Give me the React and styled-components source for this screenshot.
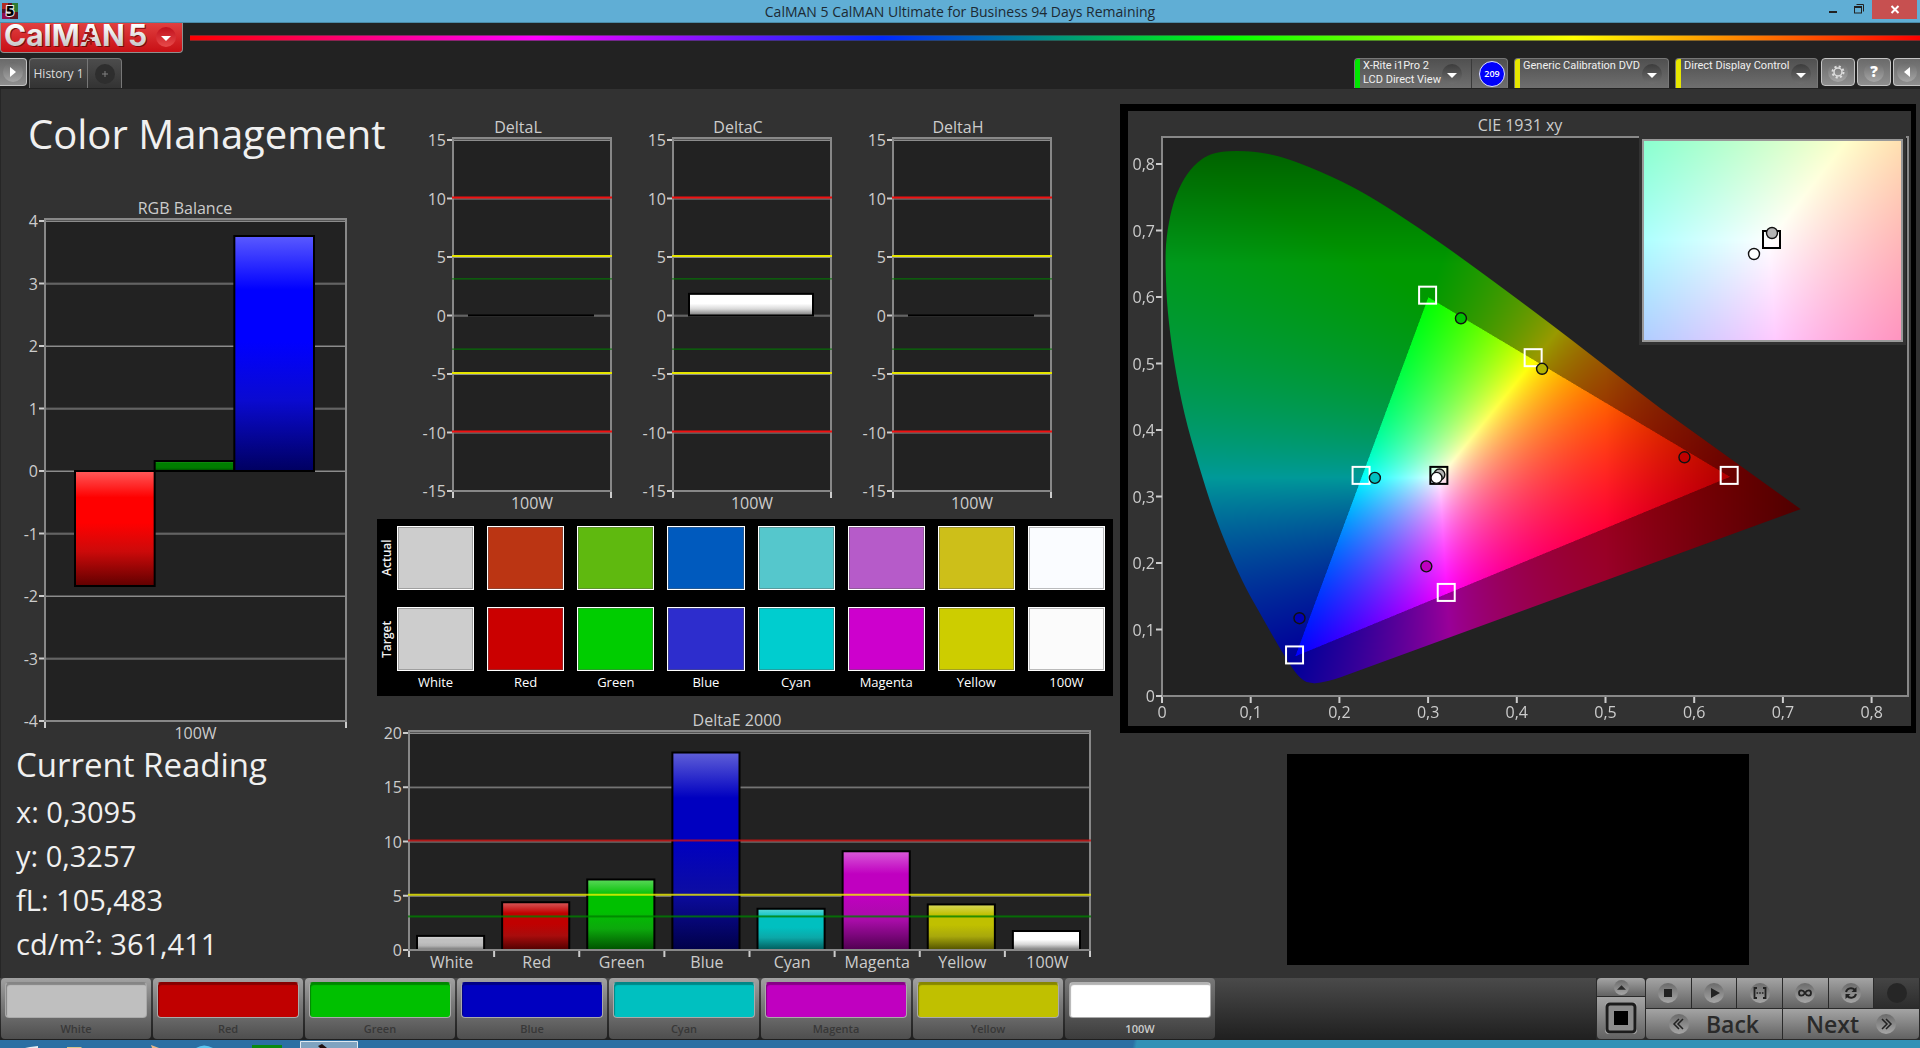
import React, { useEffect, useRef } from 'react';
import styled, { createGlobalStyle, css } from 'styled-components';

const GlobalStyle = createGlobalStyle`
  * {
    box-sizing: border-box;
  }

  body {
    margin: 0;
    background: #323232;
    color: #f0f0f0;
    font-family: "Open Sans", "Noto Sans", sans-serif;
  }

  h1, h2, p {
    margin: 0;
    font-weight: 400;
  }

  button {
    font-family: inherit;
    padding: 0;
    border: 0;
    cursor: pointer;
  }
`;

const Page = styled.div`
  display: flex;
  flex-direction: column;
  min-height: 100vh;
`;

/* ---------- window title ---------- */

const TitleBar = styled.header`
  display: grid;
  grid-template-columns: 1fr auto 1fr;
  height: 23px;
  background: #60aed5;
  border-bottom: 1px solid #4b8ba8;
`;

const AppIcon = styled.svg`
  display: block;
  width: 16px;
  height: 16px;
  margin: 3px 0 0 2px;
`;

const WindowTitle = styled.p`
  font-size: 14px;
  line-height: 23px;
  color: #1c2a33;
`;

const WindowControls = styled.div`
  display: flex;
  justify-content: flex-end;
  padding-right: 3px;
`;

const WindowButton = styled.button`
  width: ${props => (props.$close ? '45px' : '26px')};
  height: 19px;
  background: ${props => (props.$close ? '#c75050' : 'transparent')};

  svg {
    display: block;
    margin: 0 auto;
  }
`;

/* ---------- brand and tabs ---------- */

const BrandRow = styled.div`
  display: flex;
  height: 35px;
  background: #222;
`;

const BrandButton = styled.button`
  width: 183px;
  height: 30px;
  background: linear-gradient(#e04040, #c80f14);
  border: 1px solid #8f8f8f;
  border-top: 0;
  border-radius: 0 0 4px 4px;

  svg {
    display: block;
  }
`;

const Rainbow = styled.div`
  flex: 1;
  height: 6px;
  margin: 12px 0 0 7px;
  border: solid rgba(60, 60, 60, 0.6);
  border-width: 1px 0;
  background: linear-gradient(90deg, #f00, #f0f 20%, #0028ff 40%, #0f0 60%, #ff0 80%, #f00);
`;

const TabRow = styled.div`
  display: flex;
  align-items: flex-start;
  height: 31px;
  background: #222;
`;

const Spacer = styled.div`
  flex: 1;
`;

const SquareButton = styled.button`
  display: flex;
  align-items: center;
  justify-content: center;
  width: 34px;
  height: 28px;
  margin-right: 2px;
  background: linear-gradient(#6a6a6a, #8f8f8f);
  border: 1px solid #c4c4c4;
  border-radius: 4px;

  ${props => props.$edge === 'left' && css`
    width: 27px;
    border-left: 0;
    border-radius: 0 4px 4px 0;
  `}

  ${props => props.$edge === 'right' && css`
    width: 27px;
    margin-right: 0;
    border-right: 0;
    border-radius: 4px 0 0 4px;
  `}
`;

const Tab = styled.button`
  height: 30px;
  width: ${props => props.$width};
  font-size: 12px;
  color: #ddd;
  background: linear-gradient(#4c4c4c, #333);
  border: 1px solid #777;
  border-bottom: 0;
  border-radius: ${props => (props.$add ? '0 4px 0 0' : '4px 0 0 0')};
  border-left-width: ${props => (props.$add ? 0 : '1px')};
  display: flex;
  align-items: center;
  justify-content: center;
  white-space: nowrap;
`;

const DeviceList = styled.div`
  display: flex;
  gap: 6px;
  margin-right: 3px;
`;

const DeviceButton = styled.button`
  display: flex;
  height: 30px;
  width: ${props => props.$width};
  overflow: hidden;
  color: #f0f0f0;
  text-align: left;
  background: linear-gradient(#505050, #6f6f6f);
  border: 1px solid #777;
  border-bottom: 0;
  border-radius: 4px 4px 0 0;

  &::before {
    content: '';
    flex: none;
    width: 5px;
    height: 100%;
    background: ${props => props.$status};
  }
`;

const DeviceName = styled.span`
  flex: 1;
  min-width: 0;
  padding: 0 0 0 3px;
  font-family: Roboto, sans-serif;
  font-size: 11px;
  line-height: 14px;
  white-space: pre;
`;

const DeviceIcon = styled.span`
  display: flex;
  align-items: center;
  align-self: center;
  padding-right: ${props => (props.$wide ? '9px' : '6px')};
`;

const CountCell = styled.span`
  display: flex;
  align-items: center;
  justify-content: flex-end;
  width: 36px;
  padding-right: 2px;
  border-left: 1px solid #3a3a3a;
`;

const CountBadge = styled.span`
  width: 26px;
  height: 26px;
  border: 1px solid #dfe3ff;
  border-radius: 50%;
  background: #0000fa;
  color: #fff;
  font-size: 9px;
  font-weight: 600;
  line-height: 24px;
  text-align: center;
`;

/* ---------- workspace ---------- */

const Workspace = styled.main`
  flex: 1;
  display: grid;
  grid-template-columns: minmax(0, 377fr) minmax(0, 743fr) minmax(0, 800fr);
  align-items: start;
  background: #323232;
  box-shadow: inset 1px 0 #262626;
`;

const Heading = styled.h1`
  padding: 19px 0 0 28px;
  font-size: 40px;
  line-height: 52px;
  white-space: nowrap;
`;

const ReadingTitle = styled.h2`
  padding: 0 0 2px 16px;
  font-size: 33px;
  line-height: 46px;
`;

const Reading = styled.p`
  padding-left: 16px;
  font-size: 29px;
  line-height: 44px;
`;

const ChartSvg = styled.svg`
  display: block;
  width: 100%;
  height: auto;
  font-size: 16px;
  fill: #ccc;
`;

const MiddleColumn = styled.div`
  padding-top: 30px;
`;

const DeltaRow = styled.div`
  display: grid;
  grid-template-columns: repeat(3, 1fr);
  padding: 0 49px 0 34px;
`;

const SwatchPanel = styled.section`
  margin-right: 7px;
  padding: 7px 8px 2px 0;
  background: #000;
`;

const SwatchRow = styled.div`
  display: flex;
  height: 64px;
  margin-bottom: ${props => (props.$last ? 0 : '17px')};
`;

const SwatchRowName = styled.div`
  width: 20px;
  font-size: 12px;
  font-weight: 600;
  line-height: 20px;
  text-align: center;
  writing-mode: vertical-rl;
  transform: rotate(180deg);
`;

const SwatchGrid = styled.div`
  flex: 1;
  display: grid;
  grid-template-columns: repeat(8, 1fr);
  gap: 13px;
`;

const Swatch = styled.div`
  background: ${props => props.$color};
  border: 1px solid #fff;
  box-shadow: inset 0 0 0 1px rgba(90, 90, 90, 0.4);
`;

const SwatchNames = styled(SwatchGrid)`
  padding-left: 20px;
  font-size: 13px;
  line-height: 23px;
  text-align: center;
  color: #fff;
`;

const RightColumn = styled.div`
  padding: 15px 4px 0 0;
`;

const CiePanel = styled.section`
  border: solid #000;
  border-width: 7px 5px 7px 8px;
`;

const GamutCanvas = styled.canvas`
  display: block;
  width: 100%;
  height: 100%;
`;

const Preview = styled.div`
  width: 58%;
  height: 211px;
  margin: 21px auto 0;
  background: #000;
`;

/* ---------- bottom bar ---------- */

const BottomBar = styled.footer`
  display: flex;
  justify-content: space-between;
  height: 62px;
  background: linear-gradient(#4a4a4a, #1f1f1f);
`;

const PatternList = styled.div`
  display: flex;
  gap: 2px;
  padding-left: 1px;
`;

const PatternButton = styled.button`
  display: flex;
  flex-direction: column;
  align-items: center;
  width: 150px;
  height: 61px;
  padding-top: 4px;
  border-radius: 4px;
  background: ${props => (props.$active
    ? 'linear-gradient(#787878, #3c3c3c)'
    : 'linear-gradient(#a2a2a2, #7c7c7c 40%, #4e4e4e)')};
  color: ${props => (props.$active ? '#ccc' : '#383838')};
  font-size: 11px;
  font-weight: 600;
  line-height: 21px;
`;

const PatternColor = styled.span`
  width: 142px;
  height: 38px;
  border: 1px solid #aaa;
  border-top-color: rgba(0, 0, 0, 0.3);
  border-radius: 4px;
  background: ${props => props.$color};
  box-shadow: inset 1px 2px 1px rgba(0, 0, 0, 0.3);
`;

const Transport = styled.div`
  display: grid;
  grid-template-columns: 48px 273px;
  gap: 1px;
  padding: 0 1px 1px;
  background: #2a2a2a;
`;

const SourceStack = styled.div`
  display: grid;
  grid-template-rows: 18px 1fr;
  gap: 1px;
`;

const ButtonStack = styled.div`
  display: grid;
  grid-template-rows: 30px 1fr;
  gap: 1px;
`;

const ButtonLine = styled.div`
  display: grid;
  grid-template-columns: repeat(${props => props.$count}, 1fr);
  gap: 1px;
`;

const MetalButton = styled.button`
  display: flex;
  align-items: center;
  justify-content: center;
  gap: 17px;
  border-radius: ${props => props.$radius || 0};
  background: ${props => (props.$off
    ? 'linear-gradient(#454545, #2c2c2c)'
    : 'linear-gradient(#a4a4a4, #626262)')};
  color: #2a2a2a;
  font-size: 23px;
  font-weight: 600;
  line-height: 30px;
`;

const Taskbar = styled.div`
  height: 8px;
  background: linear-gradient(100deg, #2b6fa3 59%, #3191b6 59.2%, #3191b6);

  svg {
    display: block;
  }
`;

/* ---------- icons ---------- */

const RoundIcon = ({ size = 20, dark, children }) => (
  <svg width={size} height={size} viewBox="0 0 20 20" aria-hidden="true">
    <defs>
      <linearGradient id="roundDark" x1="0" y1="0" x2="0" y2="1">
        <stop offset="0" stopColor="#3c3c3c" />
        <stop offset="1" stopColor="#6e6e6e" />
      </linearGradient>
      <linearGradient id="roundLight" x1="0" y1="0" x2="0" y2="1">
        <stop offset="0" stopColor="#6b6b6b" />
        <stop offset="1" stopColor="#a6a6a6" />
      </linearGradient>
    </defs>
    <circle cx="10" cy="10" r="10" fill={dark ? 'url(#roundDark)' : 'url(#roundLight)'} />
    {children}
  </svg>
);

const Caret = () => (
  <RoundIcon dark>
    <path d="M5 9h10l-5 5z" fill="#fff" />
  </RoundIcon>
);

const Logo = () => (
  <svg width="181" height="29" viewBox="1 23 181 29" aria-label="CalMAN 5">
    <defs>
      <linearGradient id="logoText" x1="0" y1="0" x2="0" y2="1">
        <stop offset="0.2" stopColor="#fff" />
        <stop offset="0.8" stopColor="#c9c9c9" />
      </linearGradient>
      <linearGradient id="logoRound" x1="0" y1="0" x2="0" y2="1">
        <stop offset="0" stopColor="#c0101c" />
        <stop offset="1" stopColor="#e84a4a" />
      </linearGradient>
    </defs>
    <g fontFamily="Inter, sans-serif" fontWeight="700" fontSize="30">
      <g fill="#7a0a0a">
        <text x="5" y="47">CalMAN</text>
        <text x="129" y="47">5</text>
      </g>
      <g fill="url(#logoText)">
        <text x="4" y="46">CalMAN</text>
        <text x="128" y="46">5</text>
      </g>
    </g>
    <g fill="none" stroke="#a01414" strokeWidth="2" strokeLinecap="round">
      <circle cx="91" cy="30" r="1" />
      <path d="M89 33l-2 5 4 2v4M87 38l-2 3h-3M85 33h4l3 3h2" />
    </g>
    <circle cx="166" cy="37" r="10" fill="url(#logoRound)" />
    <path d="M161 36h10l-5 5z" fill="#fff" />
  </svg>
);

/* ---------- bar charts ---------- */

const BAR_TONES = {
  red: ['#ff5a5a', '#ff0000', '#cc0a0a', '#600000'],
  green: ['#2a982a', '#007e00', '#007a00', '#004000'],
  blue: ['#5a5aff', '#0000ff', '#0a0ad0', '#000060'],
  snow: ['#ffffff', '#ffffff', '#d8d8d8', '#777777'],
  gray: ['#dcdcdc', '#c0c0c0', '#b4b4b4', '#707070'],
  darkRed: ['#d85a5a', '#c00000', '#a80c0c', '#500000'],
  darkGreen: ['#5ad85a', '#00c000', '#0ca80c', '#005000'],
  darkBlue: ['#5f5fd8', '#0000c0', '#0c0ca4', '#000048'],
  darkCyan: ['#5ad8d8', '#00c0c0', '#0ca8a8', '#005a5a'],
  darkMagenta: ['#d85ad8', '#c000c0', '#a80ca8', '#500050'],
  darkYellow: ['#d8d85a', '#c0c000', '#a8a80c', '#505000'],
};

const BarGradients = () => (
  <defs>
    {Object.entries(BAR_TONES).map(([name, tones]) => (
      <linearGradient key={name} id={`bar-${name}`} x1="0" y1="0" x2="0" y2="1">
        <stop offset="0" stopColor={tones[0]} />
        <stop offset="0.23" stopColor={tones[1]} />
        <stop offset="0.45" stopColor={tones[1]} />
        <stop offset="0.7" stopColor={tones[2]} />
        <stop offset="1" stopColor={tones[3]} />
      </linearGradient>
    ))}
  </defs>
);

const BarChart = ({
  width, height, plot, title, titleX, max, min, step, bars, barInset, groups, limits = [], limitOpacity = 1,
}) => {
  const scale = (plot.bottom - plot.top - 2) / (max - min);
  const yOf = value => plot.bottom - (value - min) * scale;
  const plotWidth = plot.right - plot.left;
  const groupWidth = plotWidth / groups.length;
  const barsPerGroup = bars.length / groups.length;
  const barWidth = (groupWidth - barInset * 2 - 2) / barsPerGroup;
  const ticks = [];
  for (let value = min; value <= max; value += step) ticks.push(value);

  return (
    <ChartSvg viewBox={`0 0 ${width} ${height}`} role="img" aria-label={title}>
      <BarGradients />
      <text x={titleX} y={plot.top - 5} textAnchor="middle">{title}</text>
      <rect x={plot.left} y={plot.top} width={plotWidth} height={plot.bottom - plot.top} fill="#222" />
      {ticks.map(value => (
        <g key={value}>
          <rect x={plot.left} y={yOf(value) - 1} width={plotWidth} height="1" fill="#555" />
          <rect x={plot.left} y={yOf(value)} width={plotWidth} height="1" fill="#8c8c8c" />
          <rect x={plot.left - 6} y={yOf(value) - 1} width="6" height="2" />
          <text x={plot.left - 7} y={yOf(value) + 6} textAnchor="end">{value}</text>
        </g>
      ))}
      {bars.map((bar, index) => {
        const group = Math.floor(index / barsPerGroup);
        const x = plot.left + group * groupWidth + barInset + (index % barsPerGroup) * barWidth;
        const top = yOf(Math.max(bar.value, 0));
        const barHeight = Math.abs(bar.value) * scale;
        return (
          <rect
            key={index}
            x={x}
            y={top}
            width={barWidth}
            height={barHeight}
            fill={`url(#bar-${bar.tone})`}
            stroke="#000"
            strokeWidth="2"
          />
        );
      })}
      <rect
        x={plot.left}
        y={plot.top}
        width={plotWidth}
        height={plot.bottom - plot.top}
        fill="none"
        stroke="#888"
        strokeWidth="2"
      />
      {limits.map(limit => (
        <rect
          key={limit.value}
          x={plot.left - 1}
          y={yOf(limit.value) - 2}
          width={plotWidth + 2}
          height={limit.thin ? 1 : 2}
          fill={limit.color}
          opacity={limitOpacity}
        />
      ))}
      {groups.map((group, index) => (
        <g key={group}>
          <rect x={plot.left + index * groupWidth - 1} y={plot.bottom + 1} width="2" height="6" />
          <text x={plot.left + (index + 0.5) * groupWidth} y={plot.bottom + 18} textAnchor="middle">{group}</text>
        </g>
      ))}
      <rect x={plot.right - 1} y={plot.bottom + 1} width="2" height="6" />
    </ChartSvg>
  );
};

const DELTA_LIMITS = [
  { value: 10, color: '#f01010' },
  { value: 5, color: '#e6e600' },
  { value: 3, color: '#008000', thin: true },
  { value: -3, color: '#008000', thin: true },
  { value: -5, color: '#e6e600' },
  { value: -10, color: '#f01010' },
];

const DELTA_CHARTS = [
  { title: 'DeltaL', value: 0.02 },
  { title: 'DeltaC', value: 1.85 },
  { title: 'DeltaH', value: 0.02 },
];

const DELTA_E = [
  { name: 'White', value: 1.3, tone: 'gray' },
  { name: 'Red', value: 4.4, tone: 'darkRed' },
  { name: 'Green', value: 6.5, tone: 'darkGreen' },
  { name: 'Blue', value: 18.2, tone: 'darkBlue' },
  { name: 'Cyan', value: 3.8, tone: 'darkCyan' },
  { name: 'Magenta', value: 9.1, tone: 'darkMagenta' },
  { name: 'Yellow', value: 4.2, tone: 'darkYellow' },
  { name: '100W', value: 1.75, tone: 'snow' },
];

/* ---------- CIE diagram ---------- */

const CIE = { left: 34, bottom: 585, unitX: 887, unitY: 665 };
const cieX = x => CIE.left + x * CIE.unitX;
const cieY = y => CIE.bottom - y * CIE.unitY;

const LOCUS = [
  [0.163, 0.021], [0.158, 0.024], [0.148, 0.039], [0.131, 0.076], [0.111, 0.123], [0.094, 0.163],
  [0.076, 0.215], [0.058, 0.276], [0.041, 0.348], [0.025, 0.423], [0.013, 0.505], [0.006, 0.58],
  [0.004, 0.636], [0.004, 0.68], [0.009, 0.723], [0.016, 0.755], [0.028, 0.786], [0.044, 0.808],
  [0.061, 0.818], [0.084, 0.82], [0.111, 0.818], [0.143, 0.808], [0.192, 0.781], [0.233, 0.753],
  [0.291, 0.703], [0.349, 0.648], [0.442, 0.556], [0.524, 0.471], [0.6, 0.394], [0.72, 0.281],
];
const LOCUS_END = [[0.201, 0.028], [0.186, 0.021], [0.172, 0.019]];

const locusPath = () => {
  const px = LOCUS.map(([x, y]) => [cieX(x), cieY(y)]);
  const end = LOCUS_END.map(([x, y]) => [cieX(x), cieY(y)]);
  let d = `M${px[0]}`;
  for (let i = 1; i < px.length - 2; i += 1) {
    const mid = [(px[i][0] + px[i + 1][0]) / 2, (px[i][1] + px[i + 1][1]) / 2];
    d += `Q${px[i]} ${mid}`;
  }
  d += `L${px[px.length - 1]}L${end[0]}Q${end[1]} ${end[2]}Z`;
  return d;
};

// Linear RGB scaled to its largest channel; colours outside Rec.709 are dimmed
const chromaToRgb = (x, y) => {
  const z = 1 - x - y;
  const r = 3.2406 * x - 1.5372 * y - 0.4986 * z;
  const g = -0.9689 * x + 1.8758 * y + 0.0415 * z;
  const b = 0.0557 * x - 0.204 * y + 1.057 * z;
  const peak = Math.max(r, g, b);
  let level = Math.min(r, g, b) < 0 ? 0.6 : 1;
  if (x > 0.5) level *= Math.max(0.5, 1 - (x - 0.5) * 2.2);
  if (y > 0.65) level *= Math.max(0.6, 1 - (y - 0.65) * 2.1);
  return [r, g, b].map(channel => (Math.max(0, channel) / peak) * 255 * level);
};

const Gamut = ({ width, height, toXy, clip }) => {
  const ref = useRef(null);

  useEffect(() => {
    const ctx = ref.current.getContext('2d');
    const w = width * 2;
    const h = height * 2;
    const image = ctx.createImageData(w, h);
    for (let py = 0; py < h; py += 1) {
      for (let px = 0; px < w; px += 1) {
        const [x, y] = toXy(px / 2, py / 2);
        image.data.set([...chromaToRgb(x, y), 255], (py * w + px) * 4);
      }
    }
    ctx.putImageData(image, 0, 0);
    if (clip) {
      ctx.globalCompositeOperation = 'destination-in';
      ctx.scale(2, 2);
      ctx.fill(new Path2D(clip));
    }
  }, []);

  return <GamutCanvas ref={ref} width={width * 2} height={height * 2} />;
};

const TARGETS = [[0.3, 0.602], [0.419, 0.508], [0.64, 0.331], [0.225, 0.331], [0.321, 0.155], [0.15, 0.061]];

const MEASURED = [
  [0.337, 0.568, '#00c000'],
  [0.4285, 0.492, '#b4b400'],
  [0.589, 0.359, '#c00000'],
  [0.24, 0.328, '#00c0c0'],
  [0.298, 0.195, '#c000c0'],
  [0.155, 0.117, '#0000b4'],
  [0.3127, 0.333, '#b4b4b4'],
  [0.3095, 0.328, '#ffffff'],
];

const INSET = { x: 515, y: 29, width: 259, height: 201 };

const CieChart = () => {
  const axis = [0, 1, 2, 3, 4, 5, 6, 7, 8];
  const label = n => (n === 0 ? '0' : `0,${n}`);

  return (
    <ChartSvg viewBox="0 0 783 615" role="img" aria-label="CIE 1931 xy">
      <text x="392" y="20" textAnchor="middle">CIE 1931 xy</text>
      <rect x="34" y="26" width="746" height="559" fill="#222" />
      <foreignObject x="0" y="0" width="783" height="615">
        <Gamut
          width={783}
          height={615}
          toXy={(px, py) => [(px - CIE.left) / CIE.unitX, (CIE.bottom - py) / CIE.unitY]}
          clip={locusPath()}
        />
      </foreignObject>
      <rect x="34" y="26" width="746" height="559" fill="none" stroke="#888" strokeWidth="2" />
      {axis.map(n => (
        <g key={n}>
          <rect x="28" y={cieY(n / 10) - 1} width="6" height="2" />
          <text x="27" y={cieY(n / 10) + 6} textAnchor="end">{label(n)}</text>
          <rect x={cieX(n / 10) - 1} y="586" width="2" height="6" />
          <text x={cieX(n / 10)} y="607" textAnchor="middle">{label(n)}</text>
        </g>
      ))}
      {TARGETS.map(([x, y]) => (
        <rect key={x} x={cieX(x) - 9} y={cieY(y) - 9} width="17" height="17" fill="none" stroke="#fff" strokeWidth="2" />
      ))}
      <rect x={cieX(0.3127) - 9} y={cieY(0.331) - 9} width="17" height="17" fill="none" stroke="#000" strokeWidth="2" />
      {MEASURED.map(([x, y, color]) => (
        <circle key={x} cx={cieX(x)} cy={cieY(y)} r="5.5" fill={color} stroke="#111" strokeWidth="1.4" />
      ))}
      <rect x={INSET.x - 4} y={INSET.y - 4} width={INSET.width + 8} height={INSET.height + 8} fill="#323232" />
      <foreignObject {...INSET}>
        <Gamut
          width={INSET.width}
          height={INSET.height}
          toXy={(px, py) => [0.289 + px / 5330, 0.3531 - py / 4146]}
        />
      </foreignObject>
      <rect {...INSET} fill="none" stroke="#999" strokeWidth="2" />
      <rect x="635" y="120" width="17" height="17" fill="none" stroke="#000" strokeWidth="2" />
      <circle cx="644" cy="122" r="5.5" fill="#b4b4b4" stroke="#111" strokeWidth="1.4" />
      <circle cx="626" cy="143" r="5.5" fill="#fff" stroke="#111" strokeWidth="1.4" />
    </ChartSvg>
  );
};

/* ---------- data ---------- */

const NAMES = ['White', 'Red', 'Green', 'Blue', 'Cyan', 'Magenta', 'Yellow', '100W'];
const ACTUAL = ['#cdcdcd', '#bb3513', '#5fb90f', '#005abe', '#55c7cc', '#b65bc9', '#cdbf19', '#fafcff'];
const TARGET = ['#cdcdcd', '#cb0000', '#00cd00', '#2d2dcd', '#00cdcf', '#cd00cd', '#cdcd00', '#fbfbfb'];
const PATTERNS = ['#bfbfbf', '#c00000', '#00c000', '#0000c0', '#00c0c0', '#c000c0', '#c0c000', '#ffffff'];
const READINGS = ['x: 0,3095', 'y: 0,3257', 'fL: 105,483', 'cd/m²: 361,411'];

const App = () => (
  <Page>
    <GlobalStyle />

    <TitleBar>
      <AppIcon viewBox="0 0 16 16" aria-hidden="true">
        <rect width="16" height="16" fill="#5a1420" />
        <rect width="6" height="6" fill="#b02a20" />
        <rect x="10" width="6" height="9" fill="#2d7a35" />
        <rect y="10" width="8" height="6" fill="#901050" />
        <text x="8" y="13" textAnchor="middle" fontSize="14" fontWeight="800" fill="#000" stroke="#eee" strokeWidth="2" paintOrder="stroke">5</text>
      </AppIcon>
      <WindowTitle>CalMAN 5 CalMAN Ultimate for Business 94 Days Remaining</WindowTitle>
      <WindowControls>
        <WindowButton aria-label="Minimize">
          <svg width="12" height="19"><rect x="2" y="11" width="8" height="2" fill="#222" /></svg>
        </WindowButton>
        <WindowButton aria-label="Restore">
          <svg width="12" height="19" fill="none" stroke="#222">
            <path d="M3.5 4.500h7v7" />
            <rect x="1.500" y="7" width="7" height="6" strokeWidth="1" />
            <path d="M1 7h8" strokeWidth="2" />
          </svg>
        </WindowButton>
        <WindowButton $close aria-label="Close">
          <svg width="12" height="19"><path d="M2.500 6l7 7m0-7l-7 7" stroke="#fff" strokeWidth="2" /></svg>
        </WindowButton>
      </WindowControls>
    </TitleBar>

    <BrandRow>
      <BrandButton aria-label="CalMAN 5 menu"><Logo /></BrandButton>
      <Rainbow />
    </BrandRow>

    <TabRow>
      <SquareButton $edge="left" aria-label="Show workflow">
        <RoundIcon><path d="M7 5l6 5-6 5z" fill="#fff" /></RoundIcon>
      </SquareButton>
      <Tab $width="59px">History 1</Tab>
      <Tab $add $width="34px" aria-label="Add tab">
        <svg width="20" height="20" viewBox="0 0 20 20">
          <circle cx="10" cy="10" r="10" fill="#2e2e2e" />
          <path d="M10 7v6M7 10h6" stroke="#808080" />
        </svg>
      </Tab>
      <Spacer />
      <DeviceList>
        <DeviceButton $status="#00e600" $width="154px">
          <DeviceName>{'X-Rite i1Pro 2\nLCD Direct View'}</DeviceName>
          <DeviceIcon $wide><Caret /></DeviceIcon>
          <CountCell><CountBadge>209</CountBadge></CountCell>
        </DeviceButton>
        <DeviceButton $status="#e6e600" $width="155px">
          <DeviceName>Generic Calibration DVD</DeviceName>
          <DeviceIcon><Caret /></DeviceIcon>
        </DeviceButton>
        <DeviceButton $status="#e6e600" $width="143px">
          <DeviceName>Direct Display Control</DeviceName>
          <DeviceIcon><Caret /></DeviceIcon>
        </DeviceButton>
      </DeviceList>
      <SquareButton aria-label="Settings">
        <RoundIcon>
          <circle cx="10" cy="10" r="4" fill="none" stroke="#ddd" strokeWidth="1.5" />
          <circle cx="10" cy="10" r="5.500" fill="none" stroke="#ddd" strokeWidth="2" strokeDasharray="2.16 2.16" />
        </RoundIcon>
      </SquareButton>
      <SquareButton aria-label="Help">
        <RoundIcon>
          <text x="10" y="15" textAnchor="middle" fontSize="15" fontWeight="800" fill="#fff">?</text>
        </RoundIcon>
      </SquareButton>
      <SquareButton $edge="right" aria-label="Show panel">
        <RoundIcon><path d="M13 5l-6 5 6 5z" fill="#fff" /></RoundIcon>
      </SquareButton>
    </TabRow>

    <Workspace>
      <div>
        <Heading>Color Management</Heading>
        <BarChart
          width={377}
          height={582}
          plot={{ left: 45, right: 346, top: 59, bottom: 561 }}
          title="RGB Balance"
          titleX={185}
          max={4}
          min={-4}
          step={1}
          bars={[
            { value: -1.84, tone: 'red' },
            { value: 0.16, tone: 'green' },
            { value: 3.76, tone: 'blue' },
          ]}
          barInset={30}
          groups={['100W']}
        />
        <ReadingTitle>Current Reading</ReadingTitle>
        {READINGS.map(reading => <Reading key={reading}>{reading}</Reading>)}
      </div>

      <MiddleColumn>
        <DeltaRow>
          {DELTA_CHARTS.map(chart => (
            <BarChart
              key={chart.title}
              width={220}
              height={400}
              plot={{ left: 42, right: 200, top: 19, bottom: 372 }}
              title={chart.title}
              titleX={107}
              max={15}
              min={-15}
              step={5}
              bars={[{ value: chart.value, tone: 'snow' }]}
              barInset={16}
              groups={['100W']}
              limits={DELTA_LIMITS}
            />
          ))}
        </DeltaRow>
        <SwatchPanel>
          <SwatchRow>
            <SwatchRowName>Actual</SwatchRowName>
            <SwatchGrid>
              {ACTUAL.map((color, i) => <Swatch key={NAMES[i]} $color={color} />)}
            </SwatchGrid>
          </SwatchRow>
          <SwatchRow $last>
            <SwatchRowName>Target</SwatchRowName>
            <SwatchGrid>
              {TARGET.map((color, i) => <Swatch key={NAMES[i]} $color={color} />)}
            </SwatchGrid>
          </SwatchRow>
          <SwatchNames>
            {NAMES.map(name => <span key={name}>{name}</span>)}
          </SwatchNames>
        </SwatchPanel>
        <BarChart
          width={743}
          height={282}
          plot={{ left: 32, right: 713, top: 35, bottom: 254 }}
          title="DeltaE 2000"
          titleX={360}
          max={20}
          min={0}
          step={5}
          bars={DELTA_E}
          barInset={8}
          groups={NAMES}
          limits={[
            { value: 10, color: '#d01010' },
            { value: 5, color: '#f0f000' },
            { value: 3, color: '#008000' },
          ]}
          limitOpacity={0.8}
        />
      </MiddleColumn>

      <RightColumn>
        <CiePanel><CieChart /></CiePanel>
        <Preview />
      </RightColumn>
    </Workspace>

    <BottomBar>
      <PatternList>
        {NAMES.map((name, i) => (
          <PatternButton key={name} $active={name === '100W'}>
            <PatternColor $color={PATTERNS[i]} />
            {name}
          </PatternButton>
        ))}
      </PatternList>
      <Transport>
        <SourceStack>
          <MetalButton $radius="4px 4px 0 0" aria-label="Expand">
            <RoundIcon size={15}><path d="M4 13l6-6 6 6z" fill="#2a2a2a" /></RoundIcon>
          </MetalButton>
          <MetalButton $radius="0 0 4px 4px" aria-label="Pattern window">
            <svg width="34" height="34" viewBox="0 0 34 34">
              <rect x="1" y="1" width="32" height="32" rx="4" fill="#aaa" />
              <rect x="3" y="3" width="28" height="28" rx="3" fill="#8c8c8c" stroke="#1c1c1c" strokeWidth="3" />
              <rect x="10" y="10" width="14" height="14" />
            </svg>
          </MetalButton>
        </SourceStack>
        <ButtonStack>
          <ButtonLine $count={6}>
            <MetalButton $radius="4px 0 0 0" aria-label="Stop">
              <RoundIcon><path d="M6 6h8v8H6z" fill="#222" /></RoundIcon>
            </MetalButton>
            <MetalButton aria-label="Play">
              <RoundIcon><path d="M7 5l9 5-9 5z" fill="#222" /></RoundIcon>
            </MetalButton>
            <MetalButton aria-label="Read series">
              <RoundIcon>
                <path d="M7 5H4.500v10H7M13 5h2.500v10H13" fill="none" stroke="#222" strokeWidth="1.800" />
                <path d="M6.500 9.200h1.600v1.600H6.500zM9.200 9.200h1.600v1.600H9.200zM11.900 9.200h1.600v1.600h-1.600z" fill="#222" />
              </RoundIcon>
            </MetalButton>
            <MetalButton aria-label="Read continuously">
              <RoundIcon>
                <path d="M10 10c-2-3.500-6-3.500-6 0s4 3.500 6 0 6-3.500 6 0-4 3.500-6 0z" fill="none" stroke="#222" strokeWidth="1.800" />
              </RoundIcon>
            </MetalButton>
            <MetalButton aria-label="Refresh">
              <RoundIcon>
                <path d="M5 9c1-4 6-5 9-2M15 11c-1 4-6 5-9 2" fill="none" stroke="#222" strokeWidth="2" />
                <path d="M15.500 4v5h-5zM4.500 16v-5h5z" fill="#222" />
              </RoundIcon>
            </MetalButton>
            <MetalButton $off aria-label="Status">
              <svg width="20" height="20"><circle cx="10" cy="10" r="10" fill="#262626" /></svg>
            </MetalButton>
          </ButtonLine>
          <ButtonLine $count={2}>
            <MetalButton $radius="0 0 0 4px">
              <RoundIcon><path d="M10 5l-5 5 5 5M14 5l-5 5 5 5" fill="none" stroke="#222" strokeWidth="1.500" /></RoundIcon>
              Back
            </MetalButton>
            <MetalButton $radius="0 0 4px 0">
              Next
              <RoundIcon><path d="M6 5l5 5-5 5M10 5l5 5-5 5" fill="none" stroke="#222" strokeWidth="1.500" /></RoundIcon>
            </MetalButton>
          </ButtonLine>
        </ButtonStack>
      </Transport>
    </BottomBar>

    <Taskbar>
      <svg width="360" height="8" viewBox="0 0 360 8" aria-hidden="true">
        <path d="M25 8l5-1 8-1v2z" fill="#e8eef2" />
        <path d="M67 7h14l1 1H67z" fill="#d8c48a" />
        <path d="M151 5l8 3h-7z" fill="#e8b98a" />
        <path d="M196 8q8-5 17 0z" fill="#5cc4f0" />
        <path d="M252 5h30v3h-30z" fill="#0a8a10" />
        <path d="M300.500 8V1.500h57V8" fill="#7fa3c0" stroke="#dfe9f0" />
        <path d="M318 6l4-2 5 4h-7z" fill="#201010" />
      </svg>
    </Taskbar>
  </Page>
);

export default App;
